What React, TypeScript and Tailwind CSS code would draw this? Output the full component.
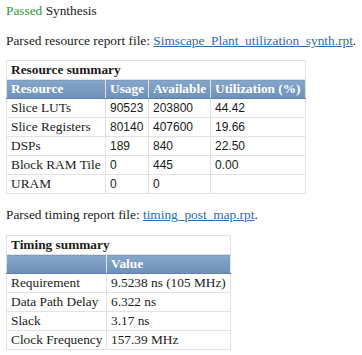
import React from 'react';

const serif = "font-['Liberation_Serif',_'Times_New_Roman',_serif]";
const sans = "font-['Liberation_Sans',_Arial,_sans-serif] text-[12px]";

type Cell = { text: string; num?: boolean };

const resourceRows: Cell[][] = [
    [{ text: "Slice LUTs" }, { text: "90523", num: true }, { text: "203800", num: true }, { text: "44.42", num: true }],
    [{ text: "Slice Registers" }, { text: "80140", num: true }, { text: "407600", num: true }, { text: "19.66", num: true }],
    [{ text: "DSPs" }, { text: "189", num: true }, { text: "840", num: true }, { text: "22.50", num: true }],
    [{ text: "Block RAM Tile" }, { text: "0", num: true }, { text: "445", num: true }, { text: "0.00", num: true }],
    [{ text: "URAM" }, { text: "0", num: true }, { text: "0", num: true }, { text: "" }],
];

const timingRows = [
    ["Requirement", "9.5238 ns (105 MHz)"],
    ["Data Path Delay", "6.322 ns"],
    ["Slack", "3.17 ns"],
    ["Clock Frequency", "157.39 MHz"],
];

const td = "border border-[#e2e2e2] px-[4px] py-[1px] leading-[16px] whitespace-nowrap align-middle";
const th = "border border-[#e2e2e2] border-b-[#5f7fa6] px-[4px] py-[1px] leading-[16px] whitespace-nowrap text-left font-bold text-white bg-gradient-to-b from-[#86a6ca] to-[#6f90b8]";

export default function App() {
    return (
        <div className={`${serif} text-[13.33px] text-[#1a1a1a] bg-white w-[362px] h-[355px] px-[6px] pt-[3px] overflow-hidden`}>
            <p className="leading-[15px]">
                <span className="text-[#2e9a2e]">Passed</span> Synthesis
            </p>
            <p className="leading-[15px] mt-[15px] whitespace-nowrap">
                Parsed resource report file:{" "}
                <a href="#" className="text-[#2a6cb0] underline">Simscape_Plant_utilization_synth.rpt</a>.
            </p>

            {/* Resource summary */}
            <table className="mt-[12px] border-collapse table-fixed w-[299px]">
                <colgroup>
                    <col className="w-[99px]" />
                    <col className="w-[43px]" />
                    <col className="w-[62px]" />
                    <col className="w-[95px]" />
                </colgroup>
                <tbody>
                    <tr>
                        <td colSpan={4} className={`${td} font-bold`}>Resource summary</td>
                    </tr>
                    <tr>
                        <th className={th}>Resource</th>
                        <th className={th}>Usage</th>
                        <th className={th}>Available</th>
                        <th className={th}>Utilization (%)</th>
                    </tr>
                    {resourceRows.map((row, i) => (
                        <tr key={i}>
                            {row.map((c, j) => (
                                <td key={j} className={`${td} ${c.num ? sans : ""}`}>{c.text}</td>
                            ))}
                        </tr>
                    ))}
                </tbody>
            </table>

            <p className="leading-[15px] mt-[13px] whitespace-nowrap">
                Parsed timing report file:{" "}
                <a href="#" className="text-[#2a6cb0] underline">timing_post_map.rpt</a>.
            </p>

            {/* Timing summary */}
            <table className="mt-[13px] border-collapse table-fixed w-[224px]">
                <colgroup>
                    <col className="w-[100px]" />
                    <col className="w-[124px]" />
                </colgroup>
                <tbody>
                    <tr>
                        <td colSpan={2} className={`${td} font-bold`}>Timing summary</td>
                    </tr>
                    <tr>
                        <th className={th}></th>
                        <th className={th}>Value</th>
                    </tr>
                    {timingRows.map(([k, v]) => (
                        <tr key={k}>
                            <td className={td}>{k}</td>
                            <td className={td}>{v}</td>
                        </tr>
                    ))}
                </tbody>
            </table>
        </div>
    );
}
